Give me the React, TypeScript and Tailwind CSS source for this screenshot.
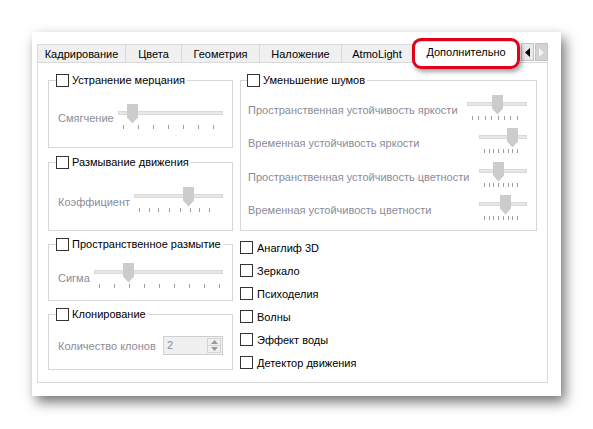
import React from "react";

function Box() {
  return <div className="h-[13px] w-[13px] shrink-0 border border-[#333333] bg-white" />;
}

function Slider({ w, thumb, ticks }: { w: number; thumb: number; ticks: number[] }) {
  return (
    <div className="relative h-[26px] shrink-0" style={{ width: w }}>
      <div className="absolute left-0 right-0 top-[7px] h-[4px] border border-[#d9d9d9] bg-[#e7e7e7]" />
      <svg className="absolute top-0" style={{ left: thumb }} width="11" height="20" viewBox="0 0 11 20">
        <polygon points="0,0 11,0 11,13.5 5.5,19.5 0,13.5" fill="#cccccc" />
      </svg>
      {ticks.map((t, i) => (
        <div key={i} className="absolute top-[21px] h-[4px] w-px bg-[#9f9f9f]" style={{ left: t }} />
      ))}
    </div>
  );
}

function range(start: number, step: number, n: number) {
  return Array.from({ length: n }, (_, i) => Math.round(start + i * step));
}

function Group({
  title,
  className,
  legendMl,
  children,
}: {
  title: string;
  className: string;
  legendMl: string;
  children?: React.ReactNode;
}) {
  return (
    <div className={`border border-[#d7d7d7] ${className}`}>
      <div className={`-mt-[8px] flex h-[14px] w-fit items-center gap-[3px] bg-white pr-[2px] ${legendMl}`}>
        <Box />
        <span className="leading-[14px]">{title}</span>
      </div>
      {children}
    </div>
  );
}

function Tab({ label, w, first }: { label: string; w: string; first?: boolean }) {
  return (
    <div
      className={`flex h-[18px] items-center justify-center border-r border-t border-[#d9d9d9] bg-[#f0f0f0] ${
        first ? "border-l" : ""
      } ${w}`}
    >
      {label}
    </div>
  );
}

const gray = "text-[#8b8b98]";

export default function App() {
  return (
    <div className="h-[429px] w-[593px] bg-white pl-[32px] pt-[32px] font-['Liberation_Sans',Arial,sans-serif] text-[11px] leading-[14px] text-black">
      <div className="relative h-[364px] w-[529px] bg-white pl-[5px] pt-[12px] shadow-[4px_6px_12px_rgba(0,0,0,0.55)]">
        {/* Tabs */}
        <div className="flex h-[18px] items-end">
          <Tab label="Кадрирование" w="w-[89px]" first />
          <Tab label="Цвета" w="w-[56px]" />
          <Tab label="Геометрия" w="w-[78px]" />
          <Tab label="Наложение" w="w-[82px]" />
          <Tab label="AtmoLight" w="w-[71px]" />
          <div className="relative z-10 -mb-px flex h-[22px] w-[106px] items-center justify-center border-x border-t border-[#d9d9d9] bg-white pb-[1px]">
            Дополнительно
          </div>
          <div className="mb-[1px] ml-[2px] flex h-[18px] w-[13px] items-center justify-center border border-[#c4c4c4] bg-[#e8e8e8]">
            <svg width="5" height="9" viewBox="0 0 5 9">
              <polygon points="5,0 5,9 0,4.5" fill="#000000" />
            </svg>
          </div>
          <div className="mb-[1px] ml-[1px] flex h-[18px] w-[13px] items-center justify-center border border-[#c4c4c4] bg-[#d3d3d3]">
            <svg width="5" height="9" viewBox="0 0 5 9">
              <polygon points="0,0 5,4.5 0,9" fill="#f4f4f4" />
            </svg>
          </div>
        </div>

        {/* Pane */}
        <div className="flex h-[321px] w-[511px] gap-[7px] border border-[#d9d9d9] pl-[10px] pt-[17px]">
          {/* Left column */}
          <div className="flex w-[185px] flex-col">
            <Group title="Устранение мерцания" className="h-[68px]" legendMl="ml-[7px]">
              <div className="mt-[17px] flex items-start pl-[9px]">
                <span className={`mt-[7px] w-[60px] ${gray}`}>Смягчение</span>
                <Slider w={105} thumb={9} ticks={range(5, 15, 7)} />
              </div>
            </Group>
            <Group title="Размывание движения" className="mt-[14px] h-[69px]" legendMl="ml-[7px]">
              <div className="mt-[18px] flex items-start pl-[9px]">
                <span className={`mt-[8px] w-[76px] ${gray}`}>Коэффициент</span>
                <Slider w={89} thumb={49} ticks={[5, 15, 24, 35, 46, 56, 65, 75]} />
              </div>
            </Group>
            <Group title="Пространственное размытие" className="mt-[13px] h-[57px]" legendMl="ml-[7px]">
              <div className="mt-[12px] flex items-start pl-[9px]">
                <span className={`mt-[8px] w-[36px] ${gray}`}>Сигма</span>
                <Slider w={129} thumb={29} ticks={range(5, 15, 9)} />
              </div>
            </Group>
            <Group title="Клонирование" className="mt-[13px] h-[56px]" legendMl="ml-[7px]">
              <div className="mt-[15px] flex items-center pl-[9px]">
                <span className={`w-[105px] ${gray}`}>Количество клонов</span>
                <div className="flex h-[19px] w-[60px] items-stretch border border-[#cfcfcf] bg-[#f0f0f0]">
                  <span className={`flex-1 pl-[3px] leading-[17px] ${gray}`}>2</span>
                  <div className="my-[1px] mr-[1px] flex w-[14px] flex-col border border-[#d4d4d4]">
                    <div className="flex flex-1 items-center justify-center border-b border-[#d4d4d4]">
                      <svg width="7" height="4" viewBox="0 0 7 4">
                        <polygon points="0,4 7,4 3.5,0" fill="#9a9a9a" />
                      </svg>
                    </div>
                    <div className="flex flex-1 items-center justify-center">
                      <svg width="7" height="4" viewBox="0 0 7 4">
                        <polygon points="0,0 7,0 3.5,4" fill="#9a9a9a" />
                      </svg>
                    </div>
                  </div>
                </div>
              </div>
            </Group>
          </div>

          {/* Right column */}
          <div className="flex w-[297px] flex-col">
            <Group title="Уменьшение шумов" className="h-[151px]" legendMl="ml-[6px]">
              <div className="mt-[8px] flex flex-col pl-[7px] pr-[9px]">
                <div className="flex h-[33px] items-start justify-between">
                  <span className={`mt-[8px] ${gray}`}>Пространственная устойчивость яркости</span>
                  <Slider w={60} thumb={25} ticks={range(5, 6.4, 8)} />
                </div>
                <div className="flex h-[34px] items-start justify-between">
                  <span className={`mt-[8px] ${gray}`}>Временная устойчивость яркости</span>
                  <Slider w={48} thumb={28} ticks={range(5, 4.7, 8)} />
                </div>
                <div className="flex h-[33px] items-start justify-between">
                  <span className={`mt-[8px] ${gray}`}>Пространственная устойчивость цветности</span>
                  <Slider w={48} thumb={14} ticks={range(5, 4.7, 8)} />
                </div>
                <div className="flex h-[33px] items-start justify-between">
                  <span className={`mt-[8px] ${gray}`}>Временная устойчивость цветности</span>
                  <Slider w={48} thumb={21} ticks={range(5, 4.7, 8)} />
                </div>
              </div>
            </Group>
            <div className="mt-[5px] flex flex-col">
              {["Анаглиф 3D", "Зеркало", "Психоделия", "Волны", "Эффект воды", "Детектор движения"].map((t) => (
                <div key={t} className="flex h-[23px] items-center gap-[4px]">
                  <Box />
                  <span>{t}</span>
                </div>
              ))}
            </div>
          </div>
        </div>

        {/* Red highlight annotation */}
        <div className="absolute left-[380px] top-[6px] z-20 h-[31px] w-[108px] rounded-[9px] border-[3px] border-[#e2001a] shadow-[2px_3px_4px_rgba(0,0,0,0.35)]" />
      </div>
    </div>
  );
}
